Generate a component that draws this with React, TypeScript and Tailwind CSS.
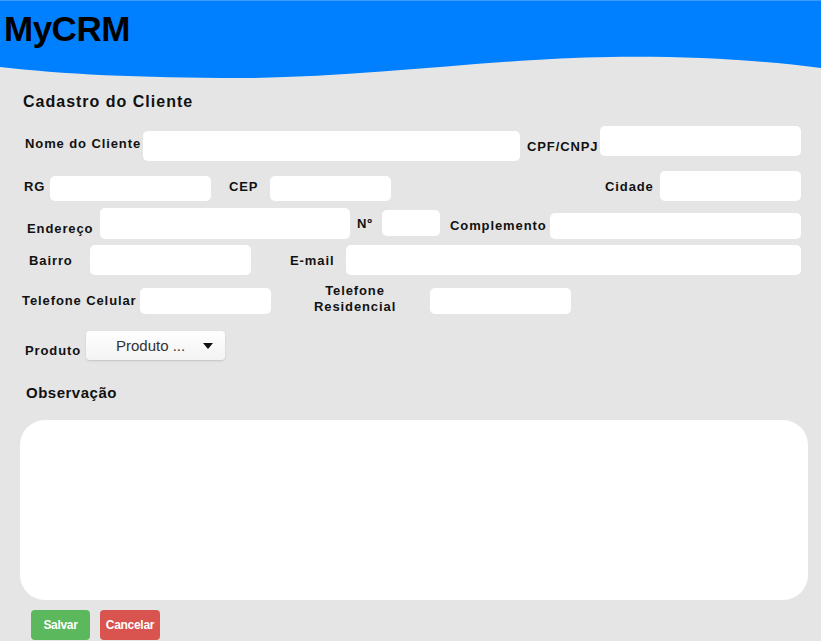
const label = "whitespace-nowrap text-[13px] leading-4 font-bold tracking-[0.9px] text-[#111]";
const field = "bg-white rounded-[5px]";

export default function App() {
  return (
    <div className="w-[821px] h-[641px] overflow-hidden bg-[#e5e5e5] font-['Liberation_Sans',Arial,sans-serif]">
      {/* header with wave */}
      <div className="relative h-[79px]">
        <svg className="absolute inset-0" width="821" height="79" viewBox="0 0 821 79" preserveAspectRatio="none">
          <path
            d="M0,0 H821 V68 C760,60 690,56 610,57 C500,58 360,78 240,78 C140,78 60,74 0,67 Z"
            fill="#0080ff"
          />
          <rect x="0" y="0" width="821" height="1" fill="#3d9dff" />
        </svg>
        <h1 className="relative pl-[4px] pt-[9px] text-[35px] leading-[40px] font-bold tracking-[-0.5px] text-black">
          MyCRM
        </h1>
      </div>

      {/* title */}
      <div className="h-[44px] pl-[23px] pt-[13px]">
        <h2 className="text-[16px] leading-5 font-bold tracking-[1px] text-[#111]">Cadastro do Cliente</h2>
      </div>

      {/* Nome / CPF */}
      <div className="flex h-[46px] items-start pl-[25px]">
        <span className={`${label} mt-[13px] w-[118px]`}>Nome do Cliente</span>
        <div className={`${field} mt-[8px] h-[30px] w-[377px]`} />
        <span className={`${label} ml-[7px] mt-[16px] w-[73px]`}>CPF/CNPJ</span>
        <div className={`${field} mt-[3px] h-[30px] w-[201px]`} />
      </div>

      {/* RG / CEP / Cidade */}
      <div className="flex h-[38px] items-start pl-[24px]">
        <span className={`${label} mt-[10px] w-[26px]`}>RG</span>
        <div className={`${field} mt-[7px] h-[25px] w-[161px]`} />
        <span className={`${label} ml-[18px] mt-[10px] w-[41px]`}>CEP</span>
        <div className={`${field} mt-[7px] h-[25px] w-[121px]`} />
        <span className={`${label} ml-[214px] mt-[10px] w-[55px]`}>Cidade</span>
        <div className={`${field} mt-[2px] h-[30px] w-[141px]`} />
      </div>

      {/* Endereço / Nº / Complemento */}
      <div className="flex h-[37px] items-start pl-[27px]">
        <span className={`${label} mt-[14px] w-[73px]`}>Endereço</span>
        <div className={`${field} mt-[1px] h-[31px] w-[250px]`} />
        <span className={`${label} ml-[7px] mt-[9px] w-[25px]`}>Nº</span>
        <div className={`${field} mt-[3px] h-[26px] w-[58px]`} />
        <span className={`${label} ml-[10px] mt-[11px] w-[100px]`}>Complemento</span>
        <div className={`${field} mt-[6px] h-[26px] w-[251px]`} />
      </div>

      {/* Bairro / E-mail */}
      <div className="flex h-[38px] items-start pl-[29px]">
        <span className={`${label} mt-[9px] w-[61px]`}>Bairro</span>
        <div className={`${field} mt-[1px] h-[30px] w-[161px]`} />
        <span className={`${label} ml-[39px] mt-[9px] w-[56px]`}>E-mail</span>
        <div className={`${field} mt-[1px] h-[30px] w-[455px]`} />
      </div>

      {/* Telefones */}
      <div className="flex h-[44px] items-start pl-[22px]">
        <span className={`${label} mt-[11px] w-[118px]`}>Telefone Celular</span>
        <div className={`${field} mt-[6px] h-[26px] w-[131px]`} />
        <span className={`${label} ml-[43px] mt-[1px] w-[82px] text-center`}>
          Telefone
          <br />
          Residencial
        </span>
        <div className={`${field} ml-[34px] mt-[6px] h-[26px] w-[141px]`} />
      </div>

      {/* Produto */}
      <div className="flex h-[48px] items-start pl-[25px]">
        <span className={`${label} mt-[17px] w-[61px]`}>Produto</span>
        <div className="mt-[5px] flex h-[29px] w-[139px] items-center rounded-[4px] bg-gradient-to-b from-white to-[#f3f3f3] pl-[30px] shadow-[0_1px_2px_rgba(0,0,0,0.15)]">
          <span className="text-[15px] leading-5 text-[#333]">Produto ...</span>
          <svg className="ml-[18px]" width="10" height="6" viewBox="0 0 10 6">
            <path d="M0,0 H10 L5,6 Z" fill="#111" />
          </svg>
        </div>
      </div>

      {/* Observação */}
      <div className="h-[46px] pl-[26px] pt-[7px]">
        <span className="text-[15px] leading-[18px] font-bold tracking-[0.5px] text-[#111]">Observação</span>
      </div>

      <div className="ml-[20px] h-[180px] w-[788px] rounded-[25px] bg-white" />

      {/* buttons */}
      <div className="mt-[10px] flex pl-[31px]">
        <button className="h-[30px] w-[59px] rounded-[4px] bg-[#5cb85c] text-[12px] font-bold tracking-[-0.3px] text-white">
          Salvar
        </button>
        <button className="ml-[10px] h-[30px] w-[60px] rounded-[4px] bg-[#d9534f] text-[12px] font-bold tracking-[-0.3px] text-white">
          Cancelar
        </button>
      </div>
    </div>
  );
}
